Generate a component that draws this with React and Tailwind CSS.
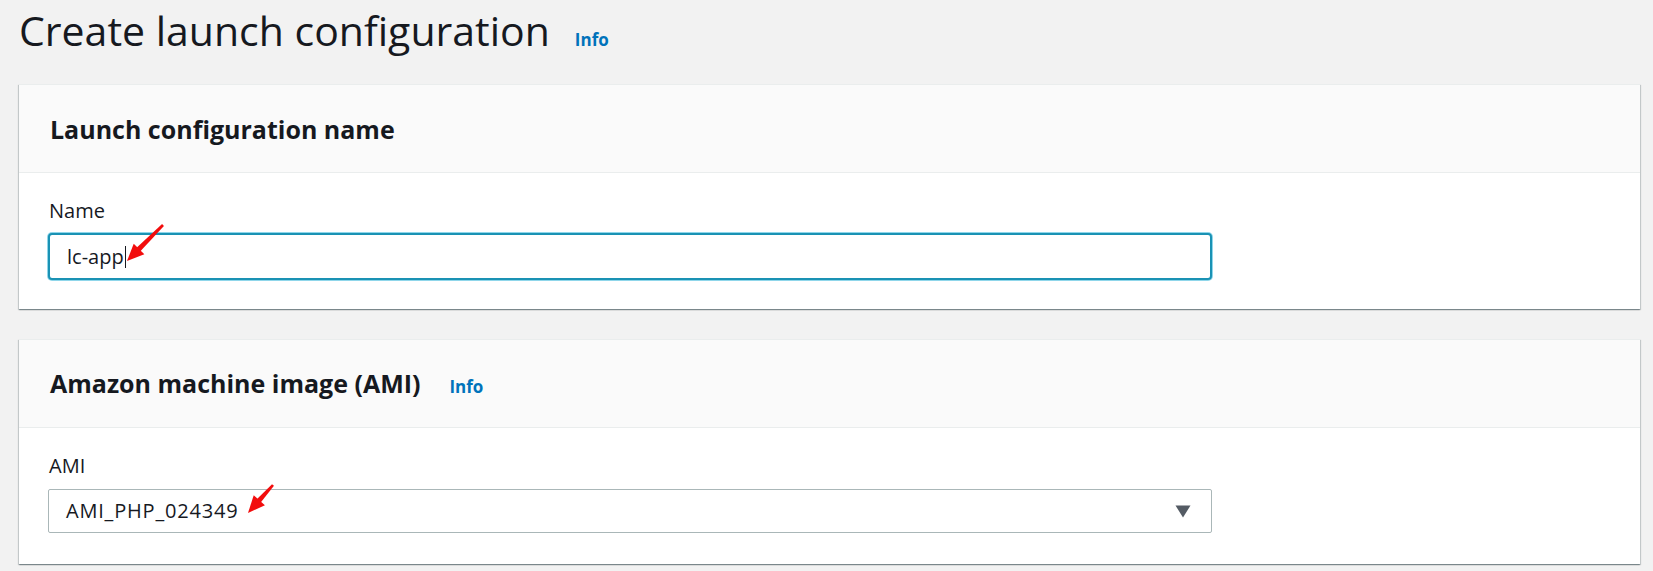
import React from "react";

function Arrow({ tail, tip }) {
  const dx = tip[0] - tail[0];
  const dy = tip[1] - tail[1];
  const len = Math.hypot(dx, dy);
  const ux = dx / len;
  const uy = dy / len;
  const px = -uy;
  const py = ux;
  const headLen = 17;
  const headHalf = 7.5;
  const bx = tip[0] - ux * headLen;
  const by = tip[1] - uy * headLen;
  const tw = 1.3;
  const bw = 2.6;
  const shaft = [
    [tail[0] + px * tw, tail[1] + py * tw],
    [bx + ux * 2 + px * bw, by + uy * 2 + py * bw],
    [bx + ux * 2 - px * bw, by + uy * 2 - py * bw],
    [tail[0] - px * tw, tail[1] - py * tw],
  ];
  const head = [
    [tip[0], tip[1]],
    [bx + px * headHalf, by + py * headHalf],
    [bx - px * headHalf, by - py * headHalf],
  ];
  const toStr = (pts) => pts.map((p) => p.join(",")).join(" ");
  return (
    <g fill="#f20d0d">
      <polygon points={toStr(shaft)} />
      <polygon points={toStr(head)} />
    </g>
  );
}

function Card({ title, info, label, children }) {
  return (
    <div className="ml-[19px] mr-[13px] bg-white border-t border-[#eaeded] shadow-[0_1px_1px_0_rgba(0,28,36,0.3),1px_1px_1px_0_rgba(0,28,36,0.15),-1px_1px_1px_0_rgba(0,28,36,0.15)]">
      <div className="h-[88px] bg-[#fafafa] border-b border-[#eaeded] flex items-center px-[31px]">
        <div className="flex items-baseline gap-[29px]">
          <h2 className="text-[25px] leading-[32px] font-bold text-[#16191f]">{title}</h2>
          {info && (
            <span className="text-[17px] font-bold text-[#0073bb]">Info</span>
          )}
        </div>
      </div>
      <div className="pl-[29px] pt-[24px]">
        <div className="text-[20px] leading-[28px] text-[#16191f] pl-[1px]">{label}</div>
        {children}
      </div>
    </div>
  );
}

export default function App() {
  return (
    <div
      className="relative w-[1653px] h-[571px] bg-[#f2f2f2] overflow-hidden"
      style={{ fontFamily: '"Open Sans", "Noto Sans", sans-serif' }}
    >
      <div className="pl-[19px] pt-[5px] h-[84px]">
        <div className="flex items-baseline gap-[25px]">
          <h1 className="text-[41px] leading-[50px] font-normal text-[#16191f]">
            Create launch configuration
          </h1>
          <span className="text-[17px] font-bold text-[#0073bb]">Info</span>
        </div>
      </div>

      <Card title="Launch configuration name" label="Name">
        <div className="pt-[8px] pb-[29px]">
          <div className="w-[1164px] h-[47px] rounded-[4px] border-2 border-[#1a92b4] shadow-[0_0_0_1px_#8fd6ea] bg-white flex items-center pl-[17px]">
            <span className="text-[20px] text-[#16191f]">lc-app</span>
            <span className="ml-[1px] w-[1px] h-[22px] bg-[#16191f]"></span>
          </div>
        </div>
      </Card>

      <div className="h-[30px]"></div>

      <Card title="Amazon machine image (AMI)" info label="AMI">
        <div className="pt-[9px] pb-[31px]">
          <div className="w-[1164px] h-[44px] rounded-[2px] border border-[#aab7b8] bg-white flex items-center justify-between pl-[17px] pr-[20px]">
            <span className="text-[20px] tracking-[0.8px] text-[#16191f]">AMI_PHP_024349</span>
            <svg width="16" height="13" viewBox="0 0 16 13">
              <polygon points="0.5,0.5 15.5,0.5 8,12.5" fill="#545b64" />
            </svg>
          </div>
        </div>
      </Card>

      <svg className="absolute inset-0 pointer-events-none" width="1653" height="571">
        <Arrow tail={[163, 225]} tip={[127, 261]} />
        <Arrow tail={[273, 485]} tip={[248, 513]} />
      </svg>
    </div>
  );
}
